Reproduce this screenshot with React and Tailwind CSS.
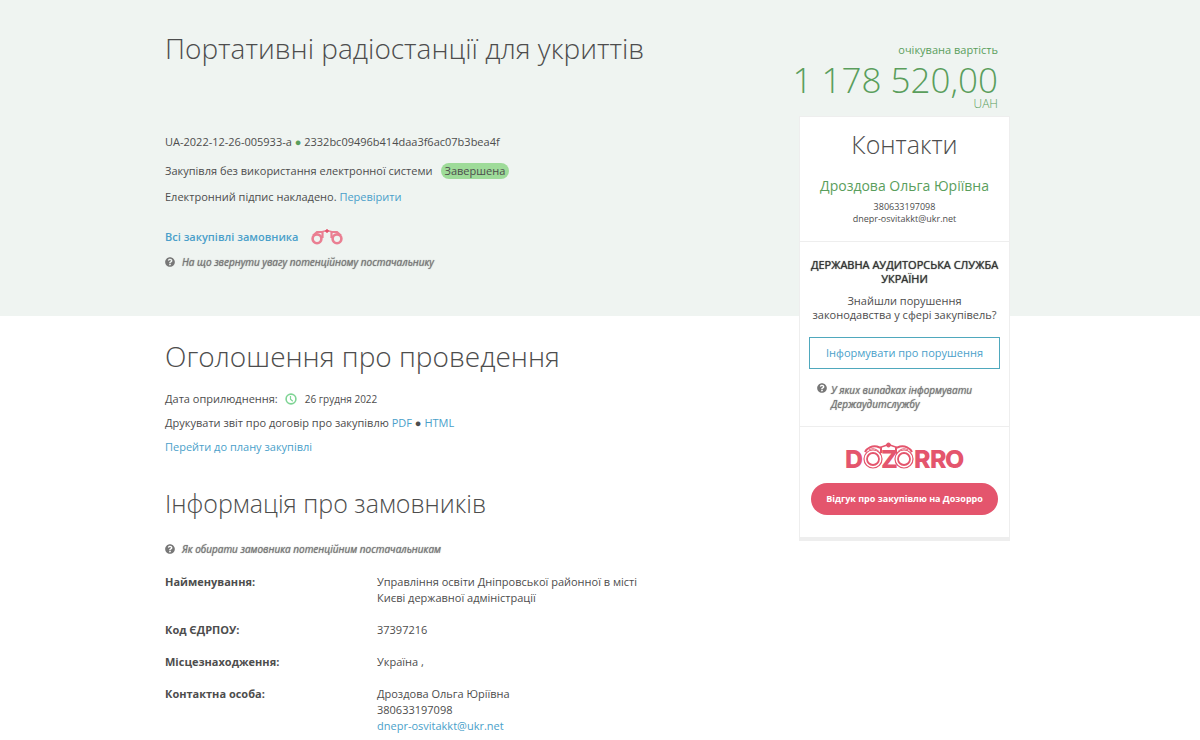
import { FaQuestionCircle } from "react-icons/fa";

const details = [
  {
    label: "Найменування:",
    lines: ["Управління освіти Дніпровської районної в місті Києві державної адміністрації"],
  },
  { label: "Код ЄДРПОУ:", lines: ["37397216"] },
  { label: "Місцезнаходження:", lines: ["Україна ,"] },
  {
    label: "Контактна особа:",
    lines: ["Дроздова Ольга Юріївна", "380633197098"],
    email: "dnepr-osvitakkt@ukr.net",
  },
];

const Binoculars = () => (
  <svg className="h-4 w-8" viewBox="0 0 32 16" fill="none" stroke="#ea7f92">
    <circle cx="6" cy="9.800" r="4.4" strokeWidth="2.6" />
    <circle cx="26" cy="9.800" r="4.4" strokeWidth="2.6" />
    <path d="M2 6.500 6 3l5.500 0v6M30 6.500 26 3l-5.500 0v6" strokeWidth="2.2" />
    <path d="M11 2.800 16 1.500l5 1.300" strokeWidth="1.4" />
    <circle cx="16" cy="2" r="1.3" fill="#e4556d" stroke="#e4556d" strokeWidth="1" />
  </svg>
);

const DozorroLogo = () => (
  <svg
    className="h-[34px] w-[120px]"
    viewBox="0 0 120 34"
    role="img"
    aria-label="Dozorro"
    fill="none"
    stroke="#e4556d"
  >
    <g fill="#e4556d" stroke="none" className="font-['Inter'] text-[25px] font-extrabold">
      <text x="0" y="26">D</text>
      <text x="36" y="26">Z</text>
      <text x="69" y="26">R</text>
      <text x="85" y="26">R</text>
      <text x="100" y="26">O</text>
    </g>
    <circle cx="28" cy="17" r="9" strokeWidth="1.2" fill="#fff" />
    <circle cx="28" cy="17" r="6" strokeWidth="1.8" />
    <circle cx="59" cy="17" r="9" strokeWidth="1.2" fill="#fff" />
    <circle cx="59" cy="17" r="6" strokeWidth="1.8" />
    <path d="M20 10c2-4 7-6.500 12-5.500l4 1.500v5M67 10c-2-4-7-6.500-12-5.500l-4 1.500v5" strokeWidth="2" />
    <path d="M24 8c3-2 8-2 12 4M63 8c-3-2-8-2-12 4" strokeWidth="1" />
    <path d="M35 5.500l8.500-3 8.500 3" strokeWidth="1.4" />
    <circle cx="43.500" cy="3" r="2" fill="#e4556d" />
  </svg>
);

const ClockIcon = () => (
  <svg className="size-3" viewBox="0 0 12 12" fill="none" stroke="#7fd495">
    <circle cx="6" cy="6" r="4.9" strokeWidth="1.6" />
    <path d="M5.500 3v3.200l2.300 2" strokeWidth="1.2" />
  </svg>
);

const Hint = ({ children }) => (
  <a href="#" className="flex items-center gap-[7px] text-[10px] leading-4 text-[#777777] italic">
    <FaQuestionCircle className="size-[10px] shrink-0" />
    <span className="[text-shadow:0_0_1px_currentColor]">{children}</span>
  </a>
);

const App = () => {
  return (
    <div className="grid grid-cols-[165fr_634px_211px_190fr] bg-white font-['Open_Sans',sans-serif] text-[11px] leading-4 text-[#4d4d4d]">
      <div className="col-span-full row-start-1 bg-[#eff4f1]" />

      <header className="col-start-2 row-start-1 pb-[46px]">
        <h1 className="pt-7 text-[28px] leading-10 font-light">
          Портативні радіостанції для укриттів
        </h1>
        <p className="mt-[66px]">
          UA-2022-12-26-005933-a <span className="text-[#5a9e5c]">●</span>{" "}
          2332bc09496b414daa3f6ac07b3bea4f
        </p>
        <p className="mt-[13px] flex items-center gap-2">
          Закупівля без використання електронної системи
          <span className="rounded-full bg-[#9edb99] px-1 leading-4">Завершена</span>
        </p>
        <p className="mt-[10px]">
          Електронний підпис накладено.{" "}
          <a href="#" className="text-[#4a9fca]">Перевірити</a>
        </p>
        <div className="mt-6 mb-[9px] flex items-center gap-3">
          <a href="#" className="font-semibold text-[#4a9fca]">Всі закупівлі замовника</a>
          <Binoculars />
        </div>
        <Hint>На що звернути увагу потенційному постачальнику</Hint>
      </header>

      <main className="col-start-2 row-start-2">
        <h2 className="pt-5 text-[28px] leading-10 font-light">Оголошення про проведення</h2>
        <p className="mt-[15px] flex items-center">
          Дата оприлюднення:
          <span className="mr-2 ml-[7px]"><ClockIcon /></span>
          <span className="text-[10px]">26 грудня 2022</span>
        </p>
        <p className="mt-2">
          Друкувати звіт про договір про закупівлю{" "}
          <a href="#" className="text-[#4a9fca]">PDF</a> ●{" "}
          <a href="#" className="text-[#4a9fca]">HTML</a>
        </p>
        <p className="mt-2">
          <a href="#" className="text-[#4a9fca]">Перейти до плану закупівлі</a>
        </p>

        <h2 className="mt-7 mb-[18px] text-[25px] leading-10 font-light">
          Інформація про замовників
        </h2>
        <Hint>Як обирати замовника потенційним постачальникам</Hint>
        <table className="mt-[17px] w-[480px]">
          <tbody>
            {details.map((row) => (
              <tr key={row.label} className="align-top">
                <th scope="row" className="w-[212px] pb-4 text-left font-bold">{row.label}</th>
                <td className="pb-4">
                  {row.lines.map((line) => (
                    <p key={line}>{line}</p>
                  ))}
                  {row.email && (
                    <a href={`mailto:${row.email}`} className="text-[#4a9fca]">{row.email}</a>
                  )}
                </td>
              </tr>
            ))}
          </tbody>
        </table>
      </main>

      <aside className="col-start-3 row-span-2 row-start-1 self-start pt-[42px]">
        <div className="pr-3 text-right text-[#5a9e5c]">
          <p>очікувана вартість</p>
          <p className="-ml-4 text-[35px] leading-[44px] font-light whitespace-nowrap">1 178 520,00</p>
          <p className="-mt-[6px] text-[12px] leading-4 font-light">UAH</p>
        </div>
        <div className="mt-1 border border-b-4 border-[#eeeeee] bg-white text-center">
          <section className="pb-4">
            <h2 className="pt-[7px] text-[25px] leading-10 font-light">Контакти</h2>
            <p className="mt-3 text-[14px] leading-5 text-[#5a9e5c]">Дроздова Ольга Юріївна</p>
            <p className="mt-[5px] text-[9px] leading-3">380633197098</p>
            <p className="text-[9px] leading-3">dnepr-osvitakkt@ukr.net</p>
          </section>
          <section className="border-t border-[#eeeeee] px-[9px] pt-4 pb-[15px] leading-[14px]">
            <h3 className="text-[#333333] [text-shadow:0_0_1px_currentColor]">
              ДЕРЖАВНА АУДИТОРСЬКА СЛУЖБА УКРАЇНИ
            </h3>
            <p className="mt-2">Знайшли порушення законодавства у сфері закупівель?</p>
            <button className="mt-[15px] h-8 w-full border border-[#4fa8bd] text-[#4a9fca]">
              Інформувати про порушення
            </button>
            <a href="#" className="mt-[14px] flex gap-1 px-2 text-left text-[10px] leading-[14px] text-[#777777] italic">
              <FaQuestionCircle className="size-[10px] shrink-0" />
              <span className="[text-shadow:0_0_1px_currentColor]">
                У яких випадках інформувати Держаудитслужбу
              </span>
            </a>
          </section>
          <section className="flex flex-col items-center border-t border-[#eeeeee] px-[11px] pt-[15px] pb-[22px]">
            <DozorroLogo />
            <button className="mt-[7px] h-8 w-full rounded-full bg-[#e4556d] text-[9px] font-bold text-white">
              Відгук про закупівлю на Дозорро
            </button>
          </section>
        </div>
      </aside>
    </div>
  );
};

export default App;
